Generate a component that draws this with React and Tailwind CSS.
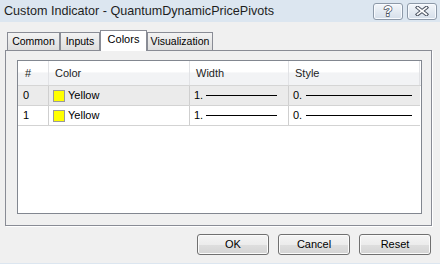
import React from 'react';

const rows = [
  { n: '0', color: 'Yellow', width: '1.', style: '0.', bg: 'bg-[#ebebeb]' },
  { n: '1', color: 'Yellow', width: '1.', style: '0.', bg: 'bg-white' },
];

const tabs = [
  { label: 'Common', w: 'w-[53px]' },
  { label: 'Inputs', w: 'w-[40px]' },
  { label: 'Colors', w: 'w-[47px]', active: true },
  { label: 'Visualization', w: 'w-[66px]' },
];

const TitleButton = ({ children }) => (
  <div className="w-[30px] h-[17px] rounded-[3px] border border-[#8d99a8] bg-gradient-to-b from-[#f3f6fa] to-[#d5dfea] shadow-[inset_0_0_0_1px_#f8fbff] flex items-center justify-center">
    {children}
  </div>
);

const Button = ({ label }) => (
  <button className="w-[72px] h-[21px] rounded-[3px] border border-[#707070] bg-[linear-gradient(#f4f4f4_0%,#ececec_50%,#dedede_52%,#d4d4d4_100%)] shadow-[inset_0_0_0_1px_#fbfbfb] text-[11px] text-black leading-none">
    {label}
  </button>
);

export default function App() {
  return (
    <div
      className="w-[440px] h-[264px] bg-[#f0f0f0] flex flex-col overflow-hidden text-black"
      style={{ fontFamily: '"Liberation Sans", Arial, sans-serif' }}
    >
      {/* title bar */}
      <div className="h-[22px] bg-[#dce6f0] flex items-center pl-[4px] pr-[3px]">
        <span className="flex-1 text-[12.6px] text-[#1e1e1e] leading-none">Custom Indicator - QuantumDynamicPricePivots</span>
        <div className="flex gap-[4px]">
          <TitleButton>
            <span className="text-[14px] font-bold text-white leading-none [-webkit-text-stroke:1.5px_#4b5361] [paint-order:stroke_fill]">?</span>
          </TitleButton>
          <TitleButton>
            <svg width="14" height="10" viewBox="0 0 14 10">
              <path d="M2.5 1.5 L11.5 8.5 M11.5 1.5 L2.5 8.5" stroke="#4b5361" strokeWidth="3.6" strokeLinecap="square" />
              <path d="M2.5 1.5 L11.5 8.5 M11.5 1.5 L2.5 8.5" stroke="#fff" strokeWidth="1.6" strokeLinecap="square" />
            </svg>
          </TitleButton>
        </div>
      </div>

      <div className="flex-1 flex flex-col pt-[8px]">
        {/* tab strip */}
        <div className="flex items-end h-[20px] pl-[7px]">
          {tabs.map(t =>
            t.active ? (
              <div
                key={t.label}
                className={`${t.w} h-[21px] mb-[-1px] relative z-10 bg-white border border-b-0 border-[#898c95] flex items-center justify-center pb-[3px] text-[11px]`}
              >
                {t.label}
              </div>
            ) : (
              <div
                key={t.label}
                className={`${t.w} h-[18px] border border-b-0 border-[#898c95] bg-gradient-to-b from-[#f3f3f3] to-[#dedede] flex items-center justify-center text-[10.5px]`}
              >
                {t.label}
              </div>
            )
          )}
        </div>

        {/* tab page */}
        <div className="ml-[5px] w-[427px] h-[176px] border border-[#898c95] bg-[#f0f0f0] shadow-[1px_1px_0_#fff] pt-[9px] pl-[11px] pr-[9px] pb-[11px]">
          <div className="w-[405px] h-[154px] border border-[#828790] bg-white">
            {/* header */}
            <div className="flex h-[25px] border-b border-[#d5d5d5] bg-[linear-gradient(#ffffff_0%,#ffffff_45%,#f2f3f5_50%,#f2f3f5_100%)] text-[11px] text-[#1e1e1e]">
              <div className="w-[31px] border-r border-[#e2e3e6] flex items-center pl-[7px]">#</div>
              <div className="w-[141px] border-r border-[#e2e3e6] flex items-center pl-[6px]">Color</div>
              <div className="w-[99px] border-r border-[#e2e3e6] flex items-center pl-[6px]">Width</div>
              <div className="w-[131px] border-r border-[#e2e3e6] flex items-center pl-[6px]">Style</div>
            </div>
            {rows.map(r => (
              <div key={r.n} className={`flex h-[20px] w-[402px] border-b border-[#d3d3d3] text-[11px] ${r.bg}`}>
                <div className="w-[31px] border-r border-[#cfcfcf] flex items-center pl-[5px]">{r.n}</div>
                <div className="w-[141px] border-r border-[#cfcfcf] flex items-center pl-[4px] gap-[3px]">
                  <span className="w-[12px] h-[12px] border border-[#9a9a9a] bg-[#ffff00]" />
                  <span>{r.color}</span>
                </div>
                <div className="w-[99px] border-r border-[#cfcfcf] flex items-center pl-[4px]">
                  <span className="w-[12px]">{r.width}</span>
                  <span className="w-[71px] h-[1px] bg-black" />
                </div>
                <div className="w-[131px] flex items-center pl-[4px]">
                  <span className="w-[13px]">{r.style}</span>
                  <span className="w-[106px] h-[1px] bg-black" />
                </div>
              </div>
            ))}
          </div>
        </div>

        {/* buttons */}
        <div className="mt-[8px] flex justify-end gap-[9px] pr-[9px]">
          <Button label="OK" />
          <Button label="Cancel" />
          <Button label="Reset" />
        </div>
      </div>

      <div className="h-[1px] bg-[#dce6f0]" />
    </div>
  );
}
